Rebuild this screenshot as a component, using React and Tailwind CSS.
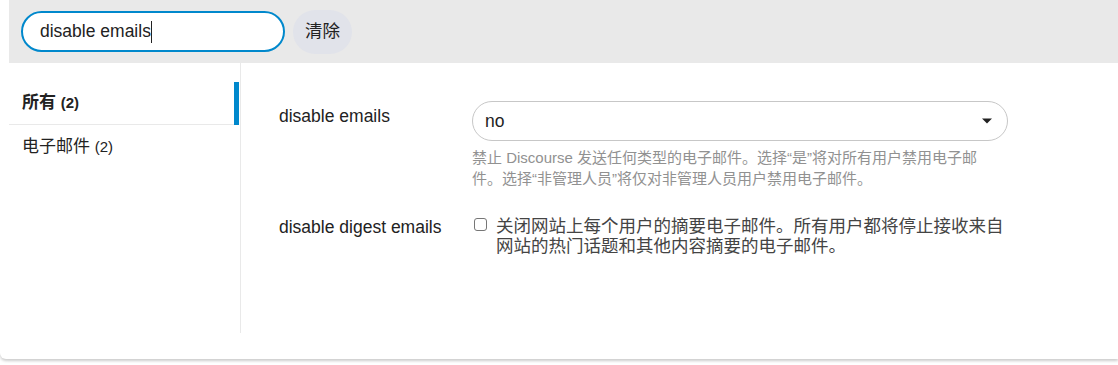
import React from 'react';

const font = { fontFamily: '"Liberation Sans", Arial, "Noto Sans CJK SC", sans-serif' };

// Left filter list
const NavItem = ({ label, count, active }) => (
    <div className={`relative flex items-center h-[43px] pl-[13px] ${active ? 'border-b border-[#e9e9e9]' : ''}`}>
        <span className={`text-[17px] text-[#222] ${active ? 'font-bold' : ''}`}>
            {label} <span className="text-[15px]">({count})</span>
        </span>
        {active && <div className="absolute right-0 top-0 h-[43px] w-[5px] bg-[#0088cc]" />}
    </div>
);

const App = () => {
    return (
        <div className="w-[1118px] h-[365px] bg-white" style={font}>
            <div className="h-[359px] bg-white rounded-bl-md shadow-[0_2px_3px_rgba(0,0,0,0.2)]">
                {/* Search bar */}
                <div className="ml-[9px] h-[63px] bg-[#e9e9e9] flex items-center pl-[12px] gap-[8px]">
                    <div className="w-[264px] h-[41px] rounded-full border-2 border-[#0088cc] bg-white flex items-center pl-[17px] text-[17.5px] text-[#222]">
                        disable emails<span className="inline-block w-px h-[22px] bg-[#222]" />
                    </div>
                    <button className="h-[44px] w-[59px] rounded-full bg-[#e1e3ea] text-[17.5px] text-[#222]">清除</button>
                </div>

                <div className="flex">
                    {/* Category nav */}
                    <div className="ml-[9px] w-[232px] h-[270px] border-r border-[#e9e9e9] pt-[19px] pr-px">
                        <NavItem label="所有" count={2} active />
                        <NavItem label="电子邮件" count={2} />
                    </div>

                    {/* Settings */}
                    <div className="pl-[38px] pt-[38px] flex flex-col gap-[27px]">
                        <div className="flex">
                            <div className="w-[193px] pt-[2px] text-[17.5px] text-[#222]">disable emails</div>
                            <div className="w-[536px]">
                                <div className="h-[40px] rounded-full border border-[#c7c7c7] flex items-center justify-between pl-[12px] pr-[14px] text-[17.5px] text-[#222]">
                                    <span>no</span>
                                    <svg width="12" height="8" viewBox="0 0 12 8"><path d="M1 1.5h10L6 6.5z" fill="#222" /></svg>
                                </div>
                                <p className="mt-[6px] w-[532px] text-[15px] leading-[21px] text-[#919191]">
                                    禁止 Discourse 发送任何类型的电子邮件。选择“是”将对所有用户禁用电子邮件。选择“非管理人员”将仅对非管理人员用户禁用电子邮件。
                                </p>
                            </div>
                        </div>

                        <div className="flex">
                            <div className="w-[193px] pt-px text-[17.5px] leading-[20px] text-[#222]">disable digest emails</div>
                            <label className="flex items-start w-[560px]">
                                <span className="mt-[2px] ml-[2px] w-[13px] h-[13px] rounded-[3px] border border-[#767676] bg-white shrink-0" />
                                <span className="ml-[9px] w-[514px] text-[17.5px] leading-[20px] text-[#444]">
                                    关闭网站上每个用户的摘要电子邮件。所有用户都将停止接收来自网站的热门话题和其他内容摘要的电子邮件。
                                </span>
                            </label>
                        </div>
                    </div>
                </div>
            </div>
        </div>
    );
};

export default App;
